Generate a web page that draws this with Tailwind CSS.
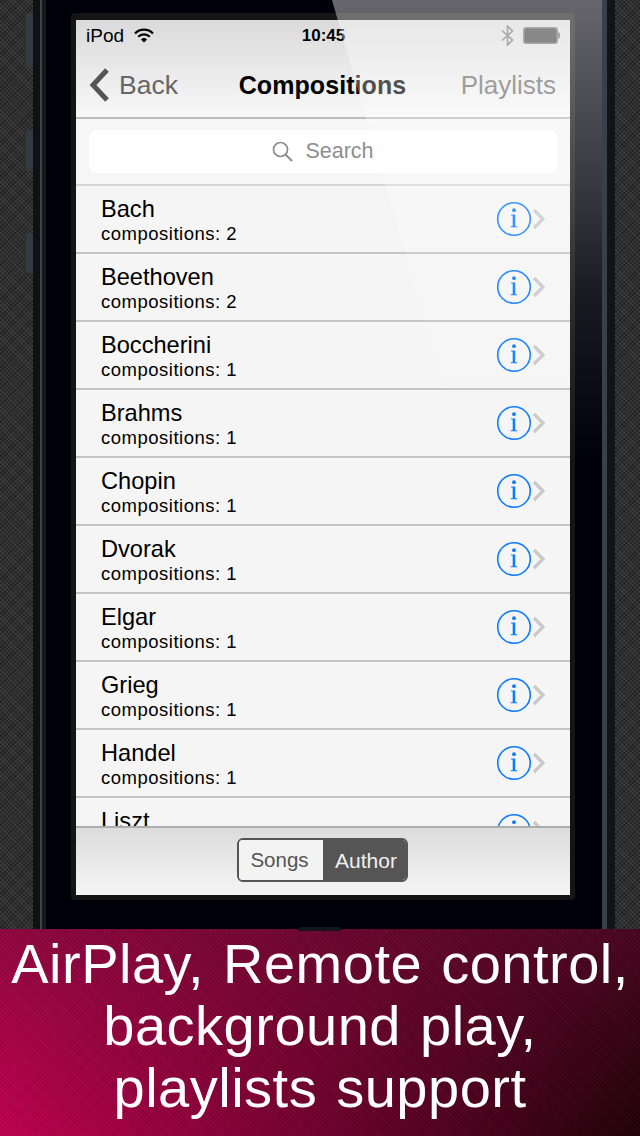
<!DOCTYPE html>
<html lang="en">
<head>
<meta charset="utf-8">
<title>Compositions</title>
<script src="https://cdn.jsdelivr.net/npm/@tailwindcss/browser@4"></script>
</head>
<body class="m-0 bg-black">
<div class="relative w-[640px] h-[1136px] overflow-hidden font-['Liberation_Sans',Arial,sans-serif] flex flex-col">

  <!-- device area -->
  <div class="relative h-[929px] flex shrink-0">
    <div class="w-[33px] bg-[#2f2f2f] bg-[image:repeating-linear-gradient(45deg,#ffffff12_0_1px,transparent_1px_3px),repeating-linear-gradient(-45deg,#00000050_0_1px,transparent_1px_3px)]"></div>
    <div class="w-[7px] bg-[#101112]"></div>
    <div class="w-[2px] bg-[#3b424c]"></div>
    <div class="w-[4px] bg-[#15171b]"></div>

    <div class="w-[556px] bg-[#00000a] pl-[25px] pr-[27px] pt-[13px] pb-[29px]">
      <div class="w-[504px] h-[887px] bg-[#151515] rounded-[4px] pt-[7px] px-[5px] pb-[5px]">
        <div class="w-[494px] h-[875px] flex flex-col overflow-hidden">

          <!-- status + nav -->
          <div class="h-[97px] bg-[image:linear-gradient(to_bottom,#dadada,#f8f8f8)] shrink-0">
            <div class="h-[30px] grid grid-cols-[1fr_auto_1fr] items-center px-[10px] text-black">
              <div class="flex items-center gap-[10px]">
                <span class="text-[19px] leading-none">iPod</span>
                <svg class="w-[20px] h-[15px]" viewBox="0 0 20 15" fill="none" stroke="#000">
                  <path d="M1 5.5a12.5 12.5 0 0 1 18 0" stroke-width="2.2"/>
                  <path d="M4.2 8.8a8 8 0 0 1 11.6 0" stroke-width="2.2"/>
                  <path d="M10 14.5 7 11.4a4.3 4.3 0 0 1 6 0Z" fill="#000" stroke="none"/>
                </svg>
              </div>
              <span class="text-[17px] leading-none font-bold pl-px">10:45</span>
              <div class="flex items-center justify-end gap-[9px]">
                <svg class="w-[13px] h-[21px]" viewBox="0 0 13 21" fill="none" stroke="#7a7a7a" stroke-width="1.6">
                  <path d="M1 5.5 11.5 15 6.5 20V1l5 5L1 15.5"/>
                </svg>
                <svg class="w-[37px] h-[17px]" viewBox="0 0 37 17">
                  <rect x="0.8" y="0.8" width="33.4" height="15.4" rx="2.5" fill="#444" stroke="#777" stroke-width="1.6"/>
                  <rect x="34.5" y="5.5" width="2.5" height="6" rx="1" fill="#777"/>
                </svg>
              </div>
            </div>
            <div class="h-[67px] grid grid-cols-[1fr_auto_1fr] items-center pt-[3px] pl-[13px] pr-[14px]">
              <div class="flex items-center gap-[10px]">
                <svg class="w-[20px] h-[34px]" viewBox="0 0 20 34" fill="none" stroke="#555" stroke-width="5">
                  <path d="M18 2 4 17l14 15"/>
                </svg>
                <span class="text-[26.5px] leading-none text-[#666]">Back</span>
              </div>
              <span class="text-[25px] leading-none font-bold text-black tracking-[0.08px]">Compositions</span>
              <span class="text-[26px] leading-none text-[#707070] text-right">Playlists</span>
            </div>
          </div>

          <!-- search -->
          <div class="h-[67px] shrink-0 border-t-2 border-[#bcbcbc] bg-[#f6f6f6] px-[13px] pt-[11px]">
            <div class="h-[43px] rounded-[8px] bg-white flex items-center justify-center gap-[12px]">
              <svg class="w-[21px] h-[21px]" viewBox="0 0 21 21" fill="none" stroke="#8c8c8c" stroke-width="1.7">
                <circle cx="8.5" cy="8.5" r="7"/>
                <path d="m13.5 13.5 6.5 6.5" stroke-width="2"/>
              </svg>
              <span class="text-[21.5px] leading-none text-[#8e8e8e]">Search</span>
            </div>
          </div>

          <!-- list -->
          <div class="flex-1 overflow-hidden bg-[#f5f5f5] text-black">
            <div class="h-[68px] border-t-2 border-[#d6d6d6] flex items-center justify-between pl-[25px] pr-[24px]">
              <div class="pt-[2px]"><div class="text-[23.6px] leading-[28px]">Bach</div><div class="text-[18.5px] tracking-[0.5px] leading-[22px]">compositions: 2</div></div>
              <div class="flex items-center"><svg class="w-[36px] h-[36px]" viewBox="0 0 36 36"><circle cx="18" cy="18" r="16.3" fill="none" stroke="#0a7aff" stroke-width="1.6"/><circle cx="18" cy="9.2" r="1.9" fill="#0a7aff"/><path d="M15 13.5h4.2v11.7h2v1h-6.5v-1h2V14.5H15Z" fill="#0a7aff"/></svg><svg class="w-[14px] h-[22px]" viewBox="0 0 14 22" fill="none" stroke="#c9c9c9" stroke-width="3.2"><path d="m2 2 9 9-9 9"/></svg></div>
            </div>
            <div class="h-[68px] border-t-2 border-[#c4c4c4] flex items-center justify-between pl-[25px] pr-[24px]">
              <div class="pt-[2px]"><div class="text-[23.6px] leading-[28px]">Beethoven</div><div class="text-[18.5px] tracking-[0.5px] leading-[22px]">compositions: 2</div></div>
              <div class="flex items-center"><svg class="w-[36px] h-[36px]" viewBox="0 0 36 36"><circle cx="18" cy="18" r="16.3" fill="none" stroke="#0a7aff" stroke-width="1.6"/><circle cx="18" cy="9.2" r="1.9" fill="#0a7aff"/><path d="M15 13.5h4.2v11.7h2v1h-6.5v-1h2V14.5H15Z" fill="#0a7aff"/></svg><svg class="w-[14px] h-[22px]" viewBox="0 0 14 22" fill="none" stroke="#c9c9c9" stroke-width="3.2"><path d="m2 2 9 9-9 9"/></svg></div>
            </div>
            <div class="h-[68px] border-t-2 border-[#c4c4c4] flex items-center justify-between pl-[25px] pr-[24px]">
              <div class="pt-[2px]"><div class="text-[23.6px] leading-[28px]">Boccherini</div><div class="text-[18.5px] tracking-[0.5px] leading-[22px]">compositions: 1</div></div>
              <div class="flex items-center"><svg class="w-[36px] h-[36px]" viewBox="0 0 36 36"><circle cx="18" cy="18" r="16.3" fill="none" stroke="#0a7aff" stroke-width="1.6"/><circle cx="18" cy="9.2" r="1.9" fill="#0a7aff"/><path d="M15 13.5h4.2v11.7h2v1h-6.5v-1h2V14.5H15Z" fill="#0a7aff"/></svg><svg class="w-[14px] h-[22px]" viewBox="0 0 14 22" fill="none" stroke="#c9c9c9" stroke-width="3.2"><path d="m2 2 9 9-9 9"/></svg></div>
            </div>
            <div class="h-[68px] border-t-2 border-[#c4c4c4] flex items-center justify-between pl-[25px] pr-[24px]">
              <div class="pt-[2px]"><div class="text-[23.6px] leading-[28px]">Brahms</div><div class="text-[18.5px] tracking-[0.5px] leading-[22px]">compositions: 1</div></div>
              <div class="flex items-center"><svg class="w-[36px] h-[36px]" viewBox="0 0 36 36"><circle cx="18" cy="18" r="16.3" fill="none" stroke="#0a7aff" stroke-width="1.6"/><circle cx="18" cy="9.2" r="1.9" fill="#0a7aff"/><path d="M15 13.5h4.2v11.7h2v1h-6.5v-1h2V14.5H15Z" fill="#0a7aff"/></svg><svg class="w-[14px] h-[22px]" viewBox="0 0 14 22" fill="none" stroke="#c9c9c9" stroke-width="3.2"><path d="m2 2 9 9-9 9"/></svg></div>
            </div>
            <div class="h-[68px] border-t-2 border-[#c4c4c4] flex items-center justify-between pl-[25px] pr-[24px]">
              <div class="pt-[2px]"><div class="text-[23.6px] leading-[28px]">Chopin</div><div class="text-[18.5px] tracking-[0.5px] leading-[22px]">compositions: 1</div></div>
              <div class="flex items-center"><svg class="w-[36px] h-[36px]" viewBox="0 0 36 36"><circle cx="18" cy="18" r="16.3" fill="none" stroke="#0a7aff" stroke-width="1.6"/><circle cx="18" cy="9.2" r="1.9" fill="#0a7aff"/><path d="M15 13.5h4.2v11.7h2v1h-6.5v-1h2V14.5H15Z" fill="#0a7aff"/></svg><svg class="w-[14px] h-[22px]" viewBox="0 0 14 22" fill="none" stroke="#c9c9c9" stroke-width="3.2"><path d="m2 2 9 9-9 9"/></svg></div>
            </div>
            <div class="h-[68px] border-t-2 border-[#c4c4c4] flex items-center justify-between pl-[25px] pr-[24px]">
              <div class="pt-[2px]"><div class="text-[23.6px] leading-[28px]">Dvorak</div><div class="text-[18.5px] tracking-[0.5px] leading-[22px]">compositions: 1</div></div>
              <div class="flex items-center"><svg class="w-[36px] h-[36px]" viewBox="0 0 36 36"><circle cx="18" cy="18" r="16.3" fill="none" stroke="#0a7aff" stroke-width="1.6"/><circle cx="18" cy="9.2" r="1.9" fill="#0a7aff"/><path d="M15 13.5h4.2v11.7h2v1h-6.5v-1h2V14.5H15Z" fill="#0a7aff"/></svg><svg class="w-[14px] h-[22px]" viewBox="0 0 14 22" fill="none" stroke="#c9c9c9" stroke-width="3.2"><path d="m2 2 9 9-9 9"/></svg></div>
            </div>
            <div class="h-[68px] border-t-2 border-[#c4c4c4] flex items-center justify-between pl-[25px] pr-[24px]">
              <div class="pt-[2px]"><div class="text-[23.6px] leading-[28px]">Elgar</div><div class="text-[18.5px] tracking-[0.5px] leading-[22px]">compositions: 1</div></div>
              <div class="flex items-center"><svg class="w-[36px] h-[36px]" viewBox="0 0 36 36"><circle cx="18" cy="18" r="16.3" fill="none" stroke="#0a7aff" stroke-width="1.6"/><circle cx="18" cy="9.2" r="1.9" fill="#0a7aff"/><path d="M15 13.5h4.2v11.7h2v1h-6.5v-1h2V14.5H15Z" fill="#0a7aff"/></svg><svg class="w-[14px] h-[22px]" viewBox="0 0 14 22" fill="none" stroke="#c9c9c9" stroke-width="3.2"><path d="m2 2 9 9-9 9"/></svg></div>
            </div>
            <div class="h-[68px] border-t-2 border-[#c4c4c4] flex items-center justify-between pl-[25px] pr-[24px]">
              <div class="pt-[2px]"><div class="text-[23.6px] leading-[28px]">Grieg</div><div class="text-[18.5px] tracking-[0.5px] leading-[22px]">compositions: 1</div></div>
              <div class="flex items-center"><svg class="w-[36px] h-[36px]" viewBox="0 0 36 36"><circle cx="18" cy="18" r="16.3" fill="none" stroke="#0a7aff" stroke-width="1.6"/><circle cx="18" cy="9.2" r="1.9" fill="#0a7aff"/><path d="M15 13.5h4.2v11.7h2v1h-6.5v-1h2V14.5H15Z" fill="#0a7aff"/></svg><svg class="w-[14px] h-[22px]" viewBox="0 0 14 22" fill="none" stroke="#c9c9c9" stroke-width="3.2"><path d="m2 2 9 9-9 9"/></svg></div>
            </div>
            <div class="h-[68px] border-t-2 border-[#c4c4c4] flex items-center justify-between pl-[25px] pr-[24px]">
              <div class="pt-[2px]"><div class="text-[23.6px] leading-[28px]">Handel</div><div class="text-[18.5px] tracking-[0.5px] leading-[22px]">compositions: 1</div></div>
              <div class="flex items-center"><svg class="w-[36px] h-[36px]" viewBox="0 0 36 36"><circle cx="18" cy="18" r="16.3" fill="none" stroke="#0a7aff" stroke-width="1.6"/><circle cx="18" cy="9.2" r="1.9" fill="#0a7aff"/><path d="M15 13.5h4.2v11.7h2v1h-6.5v-1h2V14.5H15Z" fill="#0a7aff"/></svg><svg class="w-[14px] h-[22px]" viewBox="0 0 14 22" fill="none" stroke="#c9c9c9" stroke-width="3.2"><path d="m2 2 9 9-9 9"/></svg></div>
            </div>
            <div class="h-[68px] border-t-2 border-[#c4c4c4] flex items-center justify-between pl-[25px] pr-[24px]">
              <div class="pt-[2px] pb-[22px]"><div class="text-[23.6px] leading-[28px]">Liszt</div></div>
              <div class="flex items-center"><svg class="w-[36px] h-[36px]" viewBox="0 0 36 36"><circle cx="18" cy="18" r="16.3" fill="none" stroke="#0a7aff" stroke-width="1.6"/><circle cx="18" cy="9.2" r="1.9" fill="#0a7aff"/><path d="M15 13.5h4.2v11.7h2v1h-6.5v-1h2V14.5H15Z" fill="#0a7aff"/></svg><svg class="w-[14px] h-[22px]" viewBox="0 0 14 22" fill="none" stroke="#c9c9c9" stroke-width="3.2"><path d="m2 2 9 9-9 9"/></svg></div>
            </div>
          </div>

          <!-- toolbar -->
          <div class="h-[69px] shrink-0 border-t-2 border-[#acacac] bg-[image:linear-gradient(to_bottom,#dcdcdc,#f5f5f5)] flex justify-center pt-[10px]">
            <div class="w-[171px] h-[44px] mr-px flex rounded-[6px] overflow-hidden border-2 border-[#555]">
              <div class="w-[84px] pr-[3px] bg-[#f3f3f3] text-[#555] text-[20.5px] leading-none flex items-center justify-center">Songs</div>
              <div class="flex-1 pl-[3px] bg-[#555] text-[#f0f0f0] text-[21px] leading-none flex items-center justify-center">Author</div>
            </div>
          </div>

        </div>
      </div>
    </div>

    <div class="w-[5px] bg-[#3a4049]"></div>
    <div class="w-[8px] bg-[#121416]"></div>
    <div class="flex-1 bg-[#2f2f2f] bg-[image:repeating-linear-gradient(45deg,#ffffff12_0_1px,transparent_1px_3px),repeating-linear-gradient(-45deg,#00000050_0_1px,transparent_1px_3px)]"></div>

    <!-- side buttons -->
    <div class="absolute left-[26px] top-[13px] w-[7px] h-[54px] rounded-l-[2px] bg-[#343a44]"></div>
    <div class="absolute left-[26px] top-[130px] w-[7px] h-[41px] rounded-l-[2px] bg-[#343a44]"></div>
    <div class="absolute left-[26px] top-[233px] w-[7px] h-[40px] rounded-l-[2px] bg-[#343a44]"></div>

    <!-- home button hint -->
    <div class="absolute left-[298px] top-[927px] w-[44px] h-[4px] rounded-t-full bg-[#15161b]"></div>

    <!-- glass glare -->
    <svg class="absolute left-0 top-0 w-[640px] h-[929px] pointer-events-none" viewBox="0 0 640 929">
      <defs>
        <linearGradient id="glare" x1="0" y1="0" x2="0" y2="1">
          <stop offset="0" stop-color="#fff" stop-opacity="0.4"/>
          <stop offset="0.13" stop-color="#fff" stop-opacity="0.28"/>
          <stop offset="0.2" stop-color="#fff" stop-opacity="0.22"/>
          <stop offset="0.32" stop-color="#fff" stop-opacity="0.1"/>
          <stop offset="0.5" stop-color="#fff" stop-opacity="0"/>
        </linearGradient>
      </defs>
      <path d="M332 0H602V929H600L332 0Z" fill="url(#glare)"/>
    </svg>
  </div>

  <!-- banner -->
  <div class="flex-1 pt-[4px] text-center text-white text-[56px] leading-[62px] tracking-[0.5px] [word-spacing:3px] bg-[image:repeating-linear-gradient(45deg,#ffffff08_0_1px,transparent_1px_3px),repeating-linear-gradient(-45deg,#00000014_0_1px,transparent_1px_3px),linear-gradient(to_bottom,#6a0a308c,transparent),linear-gradient(to_right,#c00050,#200008)]">
    <p>AirPlay, Remote control,</p>
    <p>background play,</p>
    <p>playlists support</p>
  </div>
</div>
</body>
</html>
